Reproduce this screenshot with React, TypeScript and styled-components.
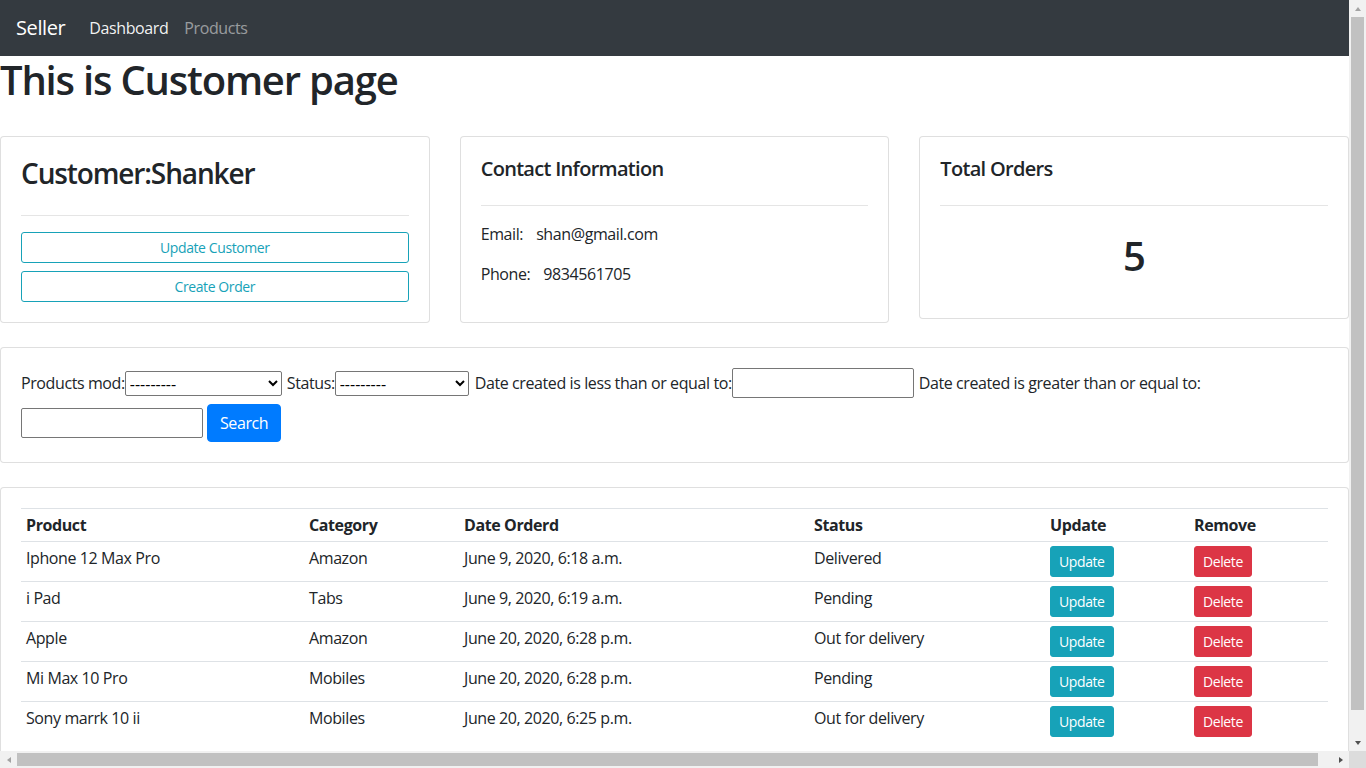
import React from "react";
import styled, { createGlobalStyle, css } from "styled-components";

const GlobalStyle = createGlobalStyle`
  html, body {
    margin: 0;
    overflow: hidden;
  }
  body {
    font-family: "Open Sans", "Noto Sans", sans-serif;
    font-size: 16px;
    line-height: 1.5;
    letter-spacing: -0.025em;
    color: #212529;
    background: #fff;
  }
  *, *::before, *::after {
    box-sizing: border-box;
  }
`;

/* browser window: page area plus the two classic scrollbars */
const Frame = styled.div`
  width: 100vw;
  height: 100vh;
  display: grid;
  grid-template-columns: 1fr 17px;
  grid-template-rows: 1fr 17px;
`;

const PageArea = styled.div`
  overflow: hidden;
`;

const VBar = styled.div`
  display: flex;
  flex-direction: column;
  background: #f1f1f1;
`;

const HBar = styled.div`
  display: flex;
  background: #f1f1f1;
`;

const BarButton = styled.div`
  flex: 0 0 17px;
  width: 17px;
  height: 17px;
  display: flex;
  align-items: center;
  justify-content: center;
`;

type Dir = "up" | "down" | "left" | "right";

const arrowShape = {
  up: css`
    border-left: 3.5px solid transparent;
    border-right: 3.5px solid transparent;
    border-bottom: 4px solid currentColor;
  `,
  down: css`
    border-left: 3.5px solid transparent;
    border-right: 3.5px solid transparent;
    border-top: 4px solid currentColor;
  `,
  left: css`
    border-top: 3.5px solid transparent;
    border-bottom: 3.5px solid transparent;
    border-right: 4px solid currentColor;
  `,
  right: css`
    border-top: 3.5px solid transparent;
    border-bottom: 3.5px solid transparent;
    border-left: 4px solid currentColor;
  `,
};

const Arrow = styled.span<{ $dir: Dir; $disabled?: boolean }>`
  width: 0;
  height: 0;
  color: ${(p) => (p.$disabled ? "#a3a3a3" : "#505050")};
  ${(p) => arrowShape[p.$dir]}
`;

const VTrack = styled.div`
  flex: 1;
  padding: 0 2px;
`;

const HTrack = styled.div`
  flex: 1;
  padding: 2px 0;
`;

const Thumb = styled.div<{ $vertical?: boolean }>`
  background: #c1c1c1;
  ${(p) => (p.$vertical ? "height: 693px;" : "width: 1301px; height: 100%;")}
`;

const Corner = styled.div`
  background: #dcdcdc;
`;

const Navbar = styled.nav`
  height: 56px;
  background: #343a40;
  display: flex;
  align-items: center;
  padding: 8px 16px;
`;

const Brand = styled.a`
  font-size: 20px;
  line-height: 30px;
  color: #fff;
  margin-right: 16px;
  text-decoration: none;
`;

const NavLink = styled.a<{ $active?: boolean }>`
  padding: 8px;
  color: ${(p) => (p.$active ? "rgba(255,255,255,0.95)" : "rgba(255,255,255,0.5)")};
  text-decoration: none;
`;

const Title = styled.h1`
  font-size: 40px;
  font-weight: 600;
  line-height: 1.2;
  letter-spacing: -0.03em;
  margin: 0 0 32px;
`;

const Row = styled.div`
  display: flex;
  flex-wrap: wrap;
  margin: 0 -15px 24px;
`;

const Col = styled.div<{ $span: number }>`
  flex: 0 0 ${(p) => (p.$span / 12) * 100}%;
  max-width: ${(p) => (p.$span / 12) * 100}%;
  padding: 0 15px;
`;

const Card = styled.div`
  background: #fff;
  border: 1px solid rgba(0, 0, 0, 0.125);
  border-radius: 4px;
`;

const CardBody = styled.div`
  padding: 20px;
`;

const CustomerName = styled.h3`
  font-size: 28px;
  font-weight: 600;
  line-height: 1.2;
  letter-spacing: -0.04em;
  margin: 0;
`;

const CardTitle = styled.h5`
  font-size: 20px;
  font-weight: 600;
  line-height: 1.2;
  letter-spacing: -0.035em;
  margin: 0;
`;

const Divider = styled.hr`
  margin: 24px 0 16px;
  border: 0;
  border-top: 1px solid rgba(0, 0, 0, 0.1);
`;

const OutlineButton = styled.button`
  display: block;
  width: 100%;
  padding: 4px 8px;
  font-family: inherit;
  font-size: 14px;
  line-height: 1.5;
  letter-spacing: inherit;
  color: #17a2b8;
  background: transparent;
  border: 1px solid #17a2b8;
  border-radius: 3px;
  & + & {
    margin-top: 8px;
  }
`;

const InfoLine = styled.p`
  margin: 0 0 16px;
`;

const InfoValue = styled.span`
  margin-left: 13px;
`;

const Count = styled.h1`
  font-size: 40px;
  font-weight: 600;
  line-height: 1.2;
  text-align: center;
  padding: 10px;
  margin: 0 0 8px;
`;

const FilterForm = styled.form`
  display: flex;
  flex-wrap: wrap;
  align-items: center;
  row-gap: 6px;
`;

const FieldLabel = styled.label<{ $gap?: number }>`
  white-space: nowrap;
  margin-left: ${(p) => p.$gap ?? 0}px;
`;

const Select = styled.select<{ $width: number }>`
  width: ${(p) => p.$width}px;
  height: 25px;
  font-family: inherit;
  font-size: 16px;
  color: #000;
  border: 1px solid #767676;
  border-radius: 2px;
  background: #fff;
`;

const TextInput = styled.input`
  width: 182px;
  height: 30px;
  font-family: inherit;
  font-size: 16px;
  border: 1px solid #767676;
  border-radius: 2px;
  padding: 1px 2px;
`;

const SearchButton = styled.button`
  margin-left: 4px;
  height: 38px;
  padding: 6px 12px;
  font-family: inherit;
  font-size: 16px;
  line-height: 1.5;
  letter-spacing: inherit;
  color: #fff;
  background: #007bff;
  border: 1px solid #007bff;
  border-radius: 4px;
`;

const Table = styled.table`
  width: 100%;
  border-collapse: collapse;
  table-layout: fixed;
  th,
  td {
    padding: 4px 5px;
    text-align: left;
    vertical-align: top;
    border-top: 1px solid #dee2e6;
  }
  th {
    font-weight: 700;
  }
`;

const SmallButton = styled.button<{ $tone: "info" | "danger" }>`
  padding: 4px 8px;
  font-family: inherit;
  font-size: 14px;
  line-height: 1.5;
  letter-spacing: inherit;
  color: #fff;
  background: ${(p) => (p.$tone === "info" ? "#17a2b8" : "#dc3545")};
  border: 1px solid ${(p) => (p.$tone === "info" ? "#17a2b8" : "#dc3545")};
  border-radius: 3px;
`;

const orders = [
  { product: "Iphone 12 Max Pro", category: "Amazon", date: "June 9, 2020, 6:18 a.m.", status: "Delivered" },
  { product: "i Pad", category: "Tabs", date: "June 9, 2020, 6:19 a.m.", status: "Pending" },
  { product: "Apple", category: "Amazon", date: "June 20, 2020, 6:28 p.m.", status: "Out for delivery" },
  { product: "Mi Max 10 Pro", category: "Mobiles", date: "June 20, 2020, 6:28 p.m.", status: "Pending" },
  { product: "Sony marrk 10 ii", category: "Mobiles", date: "June 20, 2020, 6:25 p.m.", status: "Out for delivery" },
];

const colWidths = [283, 155, 350, 236, 144, 139];

export default function App() {
  return (
    <Frame>
      <GlobalStyle />
      <PageArea>
        <Navbar>
          <Brand href="#">Seller</Brand>
          <NavLink href="#" $active>
            Dashboard
          </NavLink>
          <NavLink href="#">Products</NavLink>
        </Navbar>
        <Title>This is Customer page</Title>

        <Row>
          <Col $span={4}>
            <Card>
              <CardBody>
                <CustomerName>Customer:Shanker</CustomerName>
                <Divider />
                <OutlineButton>Update Customer</OutlineButton>
                <OutlineButton>Create Order</OutlineButton>
              </CardBody>
            </Card>
          </Col>
          <Col $span={4}>
            <Card>
              <CardBody>
                <CardTitle>Contact Information</CardTitle>
                <Divider />
                <InfoLine>
                  Email:<InfoValue>shan@gmail.com</InfoValue>
                </InfoLine>
                <InfoLine>
                  Phone:<InfoValue>9834561705</InfoValue>
                </InfoLine>
              </CardBody>
            </Card>
          </Col>
          <Col $span={4}>
            <Card>
              <CardBody>
                <CardTitle>Total Orders</CardTitle>
                <Divider />
                <Count>5</Count>
              </CardBody>
            </Card>
          </Col>
        </Row>

        <Row>
          <Col $span={12}>
            <Card>
              <CardBody>
                <FilterForm onSubmit={(e) => e.preventDefault()}>
                  <FieldLabel>Products mod:</FieldLabel>
                  <Select $width={157} defaultValue="">
                    <option value="">---------</option>
                  </Select>
                  <FieldLabel $gap={5}>Status:</FieldLabel>
                  <Select $width={134} defaultValue="">
                    <option value="">---------</option>
                  </Select>
                  <FieldLabel $gap={6}>Date created is less than or equal to:</FieldLabel>
                  <TextInput type="text" />
                  <FieldLabel $gap={5}>Date created is greater than or equal to:</FieldLabel>
                  <TextInput type="text" />
                  <SearchButton type="submit">Search</SearchButton>
                </FilterForm>
              </CardBody>
            </Card>
          </Col>
        </Row>

        <Row>
          <Col $span={12}>
            <Card>
              <CardBody>
                <Table>
                  <colgroup>
                    {colWidths.map((w, i) => (
                      <col key={i} style={{ width: w }} />
                    ))}
                  </colgroup>
                  <tbody>
                    <tr>
                      <th>Product</th>
                      <th>Category</th>
                      <th>Date Orderd</th>
                      <th>Status</th>
                      <th>Update</th>
                      <th>Remove</th>
                    </tr>
                    {orders.map((o) => (
                      <tr key={o.product}>
                        <td>{o.product}</td>
                        <td>{o.category}</td>
                        <td>{o.date}</td>
                        <td>{o.status}</td>
                        <td>
                          <SmallButton $tone="info">Update</SmallButton>
                        </td>
                        <td>
                          <SmallButton $tone="danger">Delete</SmallButton>
                        </td>
                      </tr>
                    ))}
                  </tbody>
                </Table>
              </CardBody>
            </Card>
          </Col>
        </Row>
      </PageArea>

      <VBar>
        <BarButton>
          <Arrow $dir="up" $disabled />
        </BarButton>
        <VTrack>
          <Thumb $vertical />
        </VTrack>
        <BarButton>
          <Arrow $dir="down" />
        </BarButton>
      </VBar>
      <HBar>
        <BarButton>
          <Arrow $dir="left" $disabled />
        </BarButton>
        <HTrack>
          <Thumb />
        </HTrack>
        <BarButton>
          <Arrow $dir="right" />
        </BarButton>
      </HBar>
      <Corner />
    </Frame>
  );
}
